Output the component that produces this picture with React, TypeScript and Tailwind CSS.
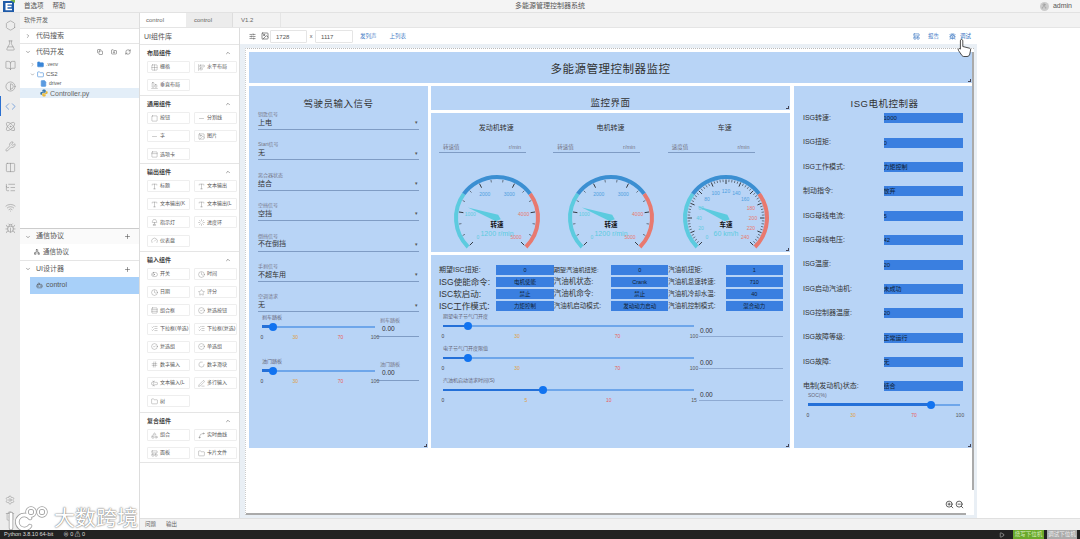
import type { ReactNode } from 'react';
import {
  Atom, BookOpen, Bot, Bug, ChevronDown, ChevronRight, ChevronUp, CircleCheck, Clock, Code, Contrast, Copy,
  FlaskConical, Folder, FolderPlus, Gauge as GaugeIcon, Grid2x2, Hash, Hexagon, Image, Lamp, LayoutPanelTop, ListChecks,
  ListTree, Loader, Minus, Network, PanelTop, PenLine, Play, Plus, RefreshCw, Rows3, Settings, SlidersHorizontal,
  Square, Star, ToggleLeft, Type, User, Wifi, Wrench, ZoomIn, ZoomOut, FileText, Columns2, AlignStartVertical, AlignEndHorizontal, Trash2, Loader2, TextCursorInput, Spline, Shapes,
} from 'lucide-react';

type LibItem = { icon: typeof Square; label: string };
type LibSection = { title: string; h: string; items: LibItem[] };

const LIB: LibSection[] = [
  { title: '布局组件', h: 'h-[51px]', items: [
    { icon: Grid2x2, label: '栅格' }, { icon: AlignStartVertical, label: '水平布局' }, { icon: AlignEndHorizontal, label: '垂直布局' },
  ] },
  { title: '通用组件', h: 'h-[68px]', items: [
    { icon: Square, label: '按钮' }, { icon: Minus, label: '分割线' }, { icon: Minus, label: '字' },
    { icon: Image, label: '图片' }, { icon: PanelTop, label: '选项卡' },
  ] },
  { title: '输出组件', h: 'h-[88px]', items: [
    { icon: Type, label: '标题' }, { icon: Type, label: '文本输出' }, { icon: Type, label: '文本输出(K' },
    { icon: Type, label: '文本输出(L' }, { icon: Lamp, label: '指示灯' }, { icon: Loader, label: '进度环' }, { icon: GaugeIcon, label: '仪表盘' },
  ] },
  { title: '输入组件', h: 'h-[161px]', items: [
    { icon: ToggleLeft, label: '开关' }, { icon: Clock, label: '时间' }, { icon: Clock, label: '日期' }, { icon: Star, label: '评分' },
    { icon: Rows3, label: '组合框' }, { icon: CircleCheck, label: '复选按钮' }, { icon: ListChecks, label: '下拉框(单选)' }, { icon: ListChecks, label: '下拉框(复选)' },
    { icon: CircleCheck, label: '复选组' }, { icon: CircleCheck, label: '单选组' }, { icon: Hash, label: '数字输入' }, { icon: Loader2, label: '数字滑块' },
    { icon: TextCursorInput, label: '文本输入(L' }, { icon: PenLine, label: '多行输入' }, { icon: Folder, label: '树' },
  ] },
  { title: '复合组件', h: 'h-[50px]', items: [
    { icon: Shapes, label: '组合' }, { icon: Spline, label: '实时曲线' }, { icon: LayoutPanelTop, label: '面板' }, { icon: Folder, label: '卡片文件' },
  ] },
];

const ACTIVITY = [Hexagon, FlaskConical, BookOpen, Contrast, Code, Atom, Wrench, Columns2, ListTree, Wifi, Bug];

const FIELDS = [
  ['钥匙信号', '上电'], ['Start信号', '无'], ['离合器状态', '结合'], ['空挡信号', '空挡'],
  ['倒挡信号', '不在倒挡'], ['手刹信号', '不超车用'], ['空调请求', '无'],
];

const DATA_ROWS = [
  [['期望ISC扭矩:', '0', 'text-[7px]'], ['期望汽油机扭矩:', '0', 'text-[6.2px]'], ['汽油机扭矩:', '1', 'text-[6.5px]']],
  [['ISG使能命令:', '电机使能', 'text-[8.5px]'], ['汽油机状态:', 'Crank', 'text-[7.5px]'], ['汽油机怠速转速:', '710', 'text-[6.5px]']],
  [['ISC软启动:', '禁止', 'text-[8.5px]'], ['汽油机命令:', '禁止', 'text-[7.5px]'], ['汽油机冷却水温:', '40', 'text-[6.5px]']],
  [['ISC工作模式:', '力矩控制', 'text-[8.5px]'], ['汽油机启动模式:', '发动动力启动', 'text-[6.5px]'], ['汽油机控制模式:', '混合动力', 'text-[6.5px]']],
];

const ISG_ROWS = [
  ['ISG转速:', '1000'], ['ISG扭矩:', '0'], ['ISG工作模式:', '力矩控制'], ['制动指令:', '放弃'],
  ['ISG母线电流:', '5'], ['ISG母线电压:', '42'], ['ISG温度:', '20'], ['ISG启动汽油机:', '未成功'],
  ['ISG控制器温度:', '20'], ['ISG故障等级:', '正常运行'], ['ISG故障:', '无'], ['电制(发动机)状态:', '结合'],
];

const CYAN = '#5ccbdf';
const BLUE = '#3b8fd2';
const RED = '#e8796f';

const polar = (cx: number, cy: number, r: number, deg: number) => {
  const a = (deg * Math.PI) / 180;
  return [cx + r * Math.cos(a), cy - r * Math.sin(a)];
};

function arcPath(cx: number, cy: number, r: number, from: number, to: number) {
  const [x1, y1] = polar(cx, cy, r, from);
  const [x2, y2] = polar(cx, cy, r, to);
  return `M${x1} ${y1} A${r} ${r} 0 ${from - to > 180 ? 1 : 0} 1 ${x2} ${y2}`;
}

function Gauge({ max, majors, minors, title, detail, value }: {
  max: number; majors: number; minors: number; title: string; detail: string; value: number;
}) {
  const cx = 58;
  const cy = 46;
  const angle = (v: number) => 225 - (v / max) * 270;
  const total = majors * minors;
  const ticks = Array.from({ length: total + 1 }, (_, i) => i);
  const labels = Array.from({ length: majors + 1 }, (_, i) => (max / majors) * i);
  const needle = angle(value);
  const [tipX, tipY] = polar(cx, cy, 31, needle);
  const [s1x, s1y] = polar(cx, cy, 3.4, needle + 90);
  const [s2x, s2y] = polar(cx, cy, 3.4, needle - 90);
  const [tailX, tailY] = polar(cx, cy, 4, needle + 180);
  return (
    <svg width="114" height="78" viewBox="0 0 114 78" className="block">
      <path d={arcPath(cx, cy, 41, 225, 144)} fill="none" stroke={CYAN} strokeWidth="4" />
      <path d={arcPath(cx, cy, 41, 144, 36)} fill="none" stroke={BLUE} strokeWidth="4" />
      <path d={arcPath(cx, cy, 41, 36, -45)} fill="none" stroke={RED} strokeWidth="4" />
      {ticks.map((i) => {
        const deg = 225 - (i / total) * 270;
        const long = i % minors === 0;
        const [x1, y1] = polar(cx, cy, 38.5, deg);
        const [x2, y2] = polar(cx, cy, long ? 34 : 36, deg);
        return <line key={i} x1={x1} y1={y1} x2={x2} y2={y2} stroke="#111" strokeWidth={long ? 0.8 : 0.5} />;
      })}
      {labels.map((v) => {
        const r = v / max;
        const [x, y] = polar(cx, cy, 27, angle(v));
        return (
          <text key={v} x={x} y={y + 2} textAnchor="middle" fontSize="5" fill={r < 0.3 ? CYAN : r <= 0.7 ? '#4f9fe0' : RED}>
            {v}
          </text>
        );
      })}
      <path d={`M${tipX} ${tipY} L${s1x} ${s1y} L${tailX} ${tailY} L${s2x} ${s2y} Z`} fill={CYAN} />
      <text x={cx} y={55} textAnchor="middle" fontSize="6.5" fontWeight="700" fill="#111">{title}</text>
      <text x={cx} y={63.5} textAnchor="middle" fontSize="7" fill={CYAN}>{detail}</text>
    </svg>
  );
}

function Slider({ label, pct, marks, width }: {
  label?: string; pct: number; marks: { at: number; text: string; color: string }[]; width: string;
}) {
  return (
    <div className={width}>
      <div className="h-[10px] text-[5px] leading-[10px] text-[#667]">{label}</div>
      <div className="relative h-[10px] flex items-center">
        <div className="h-[2px] w-full bg-[#6ea6ea]" />
        <div className="absolute left-0 h-[2.5px] bg-[#2470d8]" style={{ width: `${pct}%` }} />
        <div className="absolute w-[8px] h-[8px] -ml-[4px] rounded-full bg-[#1173f0]" style={{ left: `${pct}%` }} />
      </div>
      <div className="relative h-[10px] text-[5px] leading-[10px]">
        {marks.map((m) => (
          <span key={m.text} className="absolute -translate-x-1/2" style={{ left: `${m.at}%`, color: m.color }}>
            {m.text}
          </span>
        ))}
      </div>
    </div>
  );
}

const marks100 = [
  { at: 0, text: '0', color: '#444' },
  { at: 29.5, text: '30', color: '#e0a03c' },
  { at: 69.5, text: '70', color: '#e8605a' },
  { at: 100, text: '100', color: '#555' },
];

const marks15 = [
  { at: 33, text: '5', color: '#e0a03c' },
  { at: 66, text: '10', color: '#e8605a' },
  { at: 0, text: '0', color: '#444' },
  { at: 100, text: '15', color: '#555' },
];

function Panel({ className, children }: { className?: string; children?: ReactNode }) {
  return (
    <div className={`relative bg-[#b8d4f6] ${className ?? ''}`}>
      {children}
      <span className="absolute right-[1px] bottom-[1px] w-[3px] h-[3px] border-r border-b border-[#445]" />
    </div>
  );
}

function Explorer() {
  return (
    <div className="w-[120px] bg-white flex flex-col text-[7px] text-[#555] shrink-0 border-r border-[#ddd]">
      <div className="h-[15px] leading-[15px] px-[4px] text-[6px] bg-[#f4f4f4] text-[#666]">软件开发</div>
      <div className="h-[16px] flex items-center gap-[5px] px-[5px] border-y border-[#e5e5e5]">
        <ChevronRight size={6} /> 代码搜索
      </div>
      <div className="h-[16px] flex items-center gap-[5px] px-[5px]">
        <ChevronDown size={6} /> <span className="flex-1">代码开发</span>
        <Copy size={6} className="mr-[3px]" /><FolderPlus size={6} className="mr-[3px]" /><RefreshCw size={6} className="mr-[3px]" />
      </div>
      <div className="h-[9px] flex items-center gap-[2px] pl-[10px] text-[5px] leading-none">
        <ChevronRight size={5} /><Folder size={7} className="fill-[#3a86d8] text-[#3a86d8]" /> .venv
      </div>
      <div className="h-[10px] flex items-center gap-[2px] pl-[10px] text-[6px] leading-none">
        <ChevronDown size={5} /><Folder size={7} className="text-[#3a86d8]" /> CS2
      </div>
      <div className="h-[9px] flex items-center gap-[2px] pl-[20px] text-[5px] leading-none">
        <FileText size={7} className="fill-[#5b9be0] text-[#5b9be0]" /> driver
      </div>
      <div className="h-[10px] flex items-center gap-[2px] pl-[20px] text-[7px] leading-none bg-[#e3eef8] text-[#666]">
        <svg width="8" height="8" viewBox="0 0 8 8">
          <path d="M4 0.5C2.5 0.5 2.3 1.1 2.3 1.8V2.7H4.2V3.1H1.4C0.6 3.1 0.3 3.8 0.3 4.4C0.3 5.2 0.7 5.7 1.4 5.7H2.1V4.8C2.1 4.1 2.7 3.7 3.3 3.7H5C5.5 3.7 5.8 3.3 5.8 2.9V1.8C5.8 1 5 0.5 4 0.5Z" fill="#3b78a8" />
          <path d="M4 7.5C5.5 7.5 5.7 6.9 5.7 6.2V5.3H3.8V4.9H6.6C7.4 4.9 7.7 4.2 7.7 3.6C7.7 2.8 7.3 2.3 6.6 2.3H5.9V3.2C5.9 3.9 5.3 4.3 4.7 4.3H3C2.5 4.3 2.2 4.7 2.2 5.1V6.2C2.2 7 3 7.5 4 7.5Z" fill="#e8b93c" />
        </svg>
        Controller.py
      </div>
      <div className="flex-1" />
      <div className="h-[16px] flex items-center gap-[5px] px-[5px] border-t border-[#ccc] bg-[#fafafa]">
        <ChevronDown size={6} /> <span className="flex-1">通信协议</span><Plus size={7} className="mr-[3px]" />
      </div>
      <div className="h-[17px] flex items-center gap-[3px] pl-[14px] border-b border-[#e5e5e5] text-[6.5px]">
        <Network size={6} /> 通信协议
      </div>
      <div className="h-[16px] flex items-center gap-[5px] px-[5px]">
        <ChevronDown size={6} /> <span className="flex-1">UI设计器</span><Plus size={7} className="mr-[3px]" />
      </div>
      <div className="h-[17px] ml-[10px] flex items-center gap-[3px] pl-[6px] bg-[#a8d0f9]">
        <Bot size={7} /> control
      </div>
      <div className="h-[236px]" />
    </div>
  );
}

function Library() {
  return (
    <div className="w-[100px] bg-white flex flex-col shrink-0 border-r border-[#ddd] text-[#555]">
      <div className="h-[17px] leading-[17px] px-[4px] text-[7px] border-b border-[#e5e5e5]">UI组件库</div>
      {LIB.map((section) => (
        <div key={section.title} className={`${section.h} border-b border-[#e5e5e5] px-[7px]`}>
          <div className="h-[16px] flex items-center justify-between text-[6px] font-bold text-[#444]">
            {section.title}
            <ChevronUp size={6} className="mr-[1px]" />
          </div>
          <div className="grid grid-cols-2 gap-x-[4px] gap-y-[6.2px] w-[90px]">
            {section.items.map((item) => {
              const Icon = item.icon;
              return (
                <div key={item.label} className="h-[12px] flex items-center gap-[2px] px-[3px] border border-[#eee] rounded-[1px] text-[5px] whitespace-nowrap">
                  <Icon size={7} strokeWidth={1} className="shrink-0" />
                  {item.label}
                </div>
              );
            })}
          </div>
        </div>
      ))}
      <div className="flex-1" />
    </div>
  );
}

function Toolbar() {
  return (
    <div className="h-[16px] bg-white flex items-center pl-[9px] text-[5.5px] text-[#555] shrink-0">
      <SlidersHorizontal size={7} />
      <Image size={8} className="ml-[5px]" />
      <div className="ml-[1px] w-[37px] h-[13px] border border-[#e5e5e5] rounded-[1px] pl-[5px] leading-[12px] text-[6px]">1728</div>
      <span className="w-[8px] text-center">x</span>
      <div className="w-[38px] h-[13px] border border-[#e5e5e5] rounded-[1px] pl-[5px] leading-[12px] text-[6px]">1117</div>
      <span className="ml-[7px] text-[#4a7fc8]">发列声</span>
      <span className="ml-[13px] text-[#4a7fc8]">上列表</span>
      <div className="flex-1" />
      <LayoutPanelTop size={7} className="text-[#2f6fc0]" />
      <span className="ml-[8px] text-[#4a7fc8]">报告</span>
      <Bug size={7} className="ml-[10px] text-[#2f6fc0]" />
      <span className="ml-[4px] mr-[109px] text-[#2f6fc0]">调试</span>
    </div>
  );
}

function DriverPanel() {
  return (
    <Panel className="h-[362px] px-[9px]">
      <div className="pt-[11px] h-[25px] text-center text-[9.5px] leading-[14px] text-[#333] tracking-[0.5px]">驾驶员输入信号</div>
      {FIELDS.map(([label, value]) => (
        <div key={label} className="h-[30.4px]">
          <div className="h-[6px] text-[5px] leading-[6px] text-[#778]">{label}</div>
          <div className="h-[12px] flex items-center justify-between border-b border-[#7f9cc4] text-[7px] text-[#333] mt-[1px] pb-[1px] pr-[1px]">
            {value}
            <span className="text-[5px] text-[#555]">▾</span>
          </div>
        </div>
      ))}
      <div className="flex gap-[1px] -mt-[12px] pl-[4px]">
        <Slider label="刹车踏板" pct={10} marks={marks100} width="w-[113px]" />
        <div className="flex-1 pt-[5px]">
          <div className="h-[6px] text-[5px] leading-[6px] text-[#778] pl-[4px]">刹车踏板</div>
          <div className="h-[14px] border-b border-[#7f9cc4] text-[6.5px] leading-[12px] pl-[6px] text-[#333]">0.00</div>
        </div>
      </div>
      <div className="flex gap-[1px] mt-[14px] pl-[4px]">
        <Slider label="油门踏板" pct={10} marks={marks100} width="w-[113px]" />
        <div className="flex-1 pt-[5px]">
          <div className="h-[6px] text-[5px] leading-[6px] text-[#778] pl-[4px]">油门踏板</div>
          <div className="h-[14px] border-b border-[#7f9cc4] text-[6.5px] leading-[12px] pl-[6px] text-[#333]">0.00</div>
        </div>
      </div>
    </Panel>
  );
}

function GaugePanel() {
  const cols = [
    { title: '发动机转速', hint: '转速值', unit: 'r/min', gauge: <Gauge max={5000} majors={5} minors={3} title="转速" detail="1200 r/min" value={1200} /> },
    { title: '电机转速', hint: '转速值', unit: 'r/min', gauge: <Gauge max={5000} majors={5} minors={3} title="转速" detail="1200 r/min" value={1200} /> },
    { title: '车速', hint: '速度值', unit: 'r/min', gauge: <Gauge max={240} majors={12} minors={5} title="车速" detail="60 km/h" value={60} /> },
  ];
  return (
    <Panel className="h-[139px] px-[8px] grid grid-cols-3">
      {cols.map((col) => (
        <div key={col.title}>
          <div className="h-[29px] pt-[9px] text-center text-[7px] leading-[12px] text-[#333]">{col.title}</div>
          <div className="w-[87px] h-[11px] flex justify-between border-b border-[#7f9cc4] text-[5.5px] leading-[10px] text-[#778] pl-[4px] pr-[5px]">
            <span>{col.hint}</span><span>{col.unit}</span>
          </div>
          <div className="mt-[19px]">{col.gauge}</div>
        </div>
      ))}
    </Panel>
  );
}

function DataSlider({ label, pct, marks, mt }: { label: string; pct: number; marks: typeof marks100; mt: string }) {
  return (
    <div className={`flex ${mt}`}>
      <Slider label={label} pct={pct} marks={marks} width="w-[251px]" />
      <div className="ml-[5px] w-[84px] h-[22px] mt-[4px] pl-[1px] pt-[10px] border-b border-[#8eaad2] text-[6.5px] leading-[12px] text-[#333]">0.00</div>
    </div>
  );
}

function DataPanel() {
  return (
    <Panel className="h-[193px] pl-[8px] pr-[7px] pt-[10px]">
      <div className="flex flex-col gap-[2px]">
        {DATA_ROWS.map((row) => (
          <div key={row[0][0]} className="grid grid-cols-6 h-[10px] w-[344px] items-center">
            {row.map(([label, value, size]) => [
              <div key={label} className={`${size} leading-[10px] text-[#333] whitespace-nowrap`}>{label}</div>,
              <div key={label + '-v'} className="h-[10px] bg-[#3a7fe0] text-center text-[5.5px] leading-[10px] text-[#123]">{value}</div>,
            ])}
          </div>
        ))}
      </div>
      <div className="pl-[4px]">
        <DataSlider label="期望电子节气门开度" pct={10} marks={marks100} mt="" />
        <DataSlider label="电子节气门开度限值" pct={10} marks={marks100} mt="mt-[2px]" />
        <DataSlider label="汽油机启动请求时间(S)" pct={40} marks={marks15} mt="mt-[2px]" />
      </div>
    </Panel>
  );
}

function IsgPanel() {
  return (
    <Panel className="h-[362px] px-[9px]">
      <div className="pt-[11px] pl-[3px] h-[20px] text-center text-[9.5px] leading-[14px] text-[#333] tracking-[0.5px]">ISG电机控制器</div>
      {ISG_ROWS.map(([label, value]) => (
        <div key={label} className="h-[24.4px] flex items-center">
          <div className="w-[81px] text-[7px] text-[#333] whitespace-nowrap">{label}</div>
          <div className="w-[80px] h-[10px] bg-[#3a7fe0] text-[6px] leading-[10px] text-[#123] overflow-hidden">{value}</div>
        </div>
      ))}
      <div className="pl-[5px] -mt-[9px]">
        <Slider label="SOC(%)" pct={81} marks={[
          { at: 0, text: '0', color: '#444' }, { at: 29.6, text: '30', color: '#e0a03c' },
          { at: 69.7, text: '70', color: '#e8605a' }, { at: 100, text: '100', color: '#555' },
        ]} width="w-[152px]" />
      </div>
    </Panel>
  );
}

function Canvas() {
  return (
    <div className="flex-1 bg-[#e9eff5] pl-[5px] pr-[3px] pt-[4px] pb-[3px] min-h-0">
      <div className="relative h-full bg-white border-t border-dotted border-[#bbb] border-l border-l-[#ccc] pl-[3px] pt-[3px]">
        <Panel className="w-[723px] h-[31px] mb-[3px] flex items-center justify-center pt-[5px] text-[11.5px] text-[#333] tracking-[0.5px]">多能源管理控制器监控</Panel>
        <div className="flex">
          <div className="w-[179px] mr-[3px]"><DriverPanel /></div>
          <div className="w-[359px] mr-[4px] flex flex-col gap-[3px]">
            <Panel className="h-[24px] text-center text-[9.5px] leading-[34px] text-[#333] tracking-[0.5px]">监控界面</Panel>
            <GaugePanel />
            <DataPanel />
          </div>
          <div className="w-[178px]"><IsgPanel /></div>
        </div>
        {/* 滚动条 */}
        <div className="absolute right-[0px] top-[3px] w-[2px] h-[438px] bg-[#aaa]" />
        <div className="absolute left-0 bottom-0 w-[720px] h-[2px] bg-[#aaa]" />
        <div className="absolute right-[10px] bottom-[6px] flex gap-[1px] text-[#333]">
          <ZoomIn size={9} /><ZoomOut size={9} />
        </div>
      </div>
    </div>
  );
}

export default function App() {
  return (
    <div className="relative w-[1080px] h-[539px] overflow-hidden flex flex-col bg-white font-['Liberation_Sans','Noto_Sans_CJK_SC',sans-serif]">
      {/* 顶部菜单 */}
      <div className="h-[13px] shrink-0 flex items-center bg-[#f4f4f4] border-b border-[#e2e2e2] text-[6.5px] text-[#555]">
        <svg width="20" height="13" viewBox="0 0 20 13" className="shrink-0">
          <rect x="3" y="1" width="11" height="11" fill="#1e5aa8" />
          <path d="M5.5 3H12V4.5H7.5V5.8H11.5V7.2H7.5V8.8H12V10.3H5.5Z" fill="#fff" />
          <path d="M10 0L15 0L15 3Z" fill="#7ab648" />
        </svg>
        <span className="ml-[4px]">首选项</span>
        <span className="ml-[9px]">帮助</span>
        <span className="absolute left-[515px] text-[7px]">多能源管理控制器系统</span>
        <span className="ml-auto w-[9px] h-[9px] rounded-full bg-[#ccc] flex items-center justify-center"><User size={6} className="text-[#888]" /></span>
        <span className="ml-[4px] mr-[8px] text-[7px]">admin</span>
      </div>

      <div className="flex-1 min-h-0 flex">
        {/* 活动栏 */}
        <div className="w-[20px] shrink-0 bg-[#ececec] flex flex-col items-center pt-[2px] text-[#8a8a8a]">
          {ACTIVITY.map((Icon, i) => (
            <div key={i} className={`h-[20.3px] w-full flex items-center justify-center shrink-0 ${i === 4 ? 'border-l border-[#2a6fd0] text-[#2a6fd0]' : ''}`}>
              <Icon size={11} strokeWidth={1.2} />
            </div>
          ))}
          <div className="flex-1" />
          <Settings size={10} strokeWidth={1.2} className="mb-[6px]" />
          <Trash2 size={10} strokeWidth={1.2} className="mb-[9px]" />
        </div>

        <Explorer />

        <div className="flex-1 min-w-0 flex flex-col">
          {/* 标签页 */}
          <div className="h-[15px] shrink-0 flex bg-[#f2f2f2] border-b border-[#e5e5e5] text-[6px] text-[#666]">
            <div className="w-[46px] bg-white pl-[6px] leading-[15px]">control</div>
            <div className="w-[47px] bg-[#ececec] pl-[8px] leading-[15px] border-r border-[#ddd]">control</div>
            <div className="w-[48px] pl-[8px] leading-[15px] border-r border-[#e5e5e5]">V1.2</div>
          </div>

          <div className="flex-1 min-h-0 flex flex-col">
            <div className="flex-1 min-h-0 flex">
              <Library />
              <div className="flex-1 min-w-0 flex flex-col">
                <Toolbar />
                <div className="flex-1 min-h-0 flex">
                  <div className="w-[737px] flex flex-col"><Canvas /></div>
                  <div className="flex-1 bg-white" />
                </div>
              </div>
            </div>
            {/* 底部页签 */}
            <div className="h-[12px] shrink-0 bg-[#f2f2f2] border-t border-[#e0e0e0] flex items-center gap-[10px] pl-[5px] text-[5.5px] text-[#666]">
              <span>问题</span><span>输出</span>
            </div>
          </div>
        </div>
      </div>

      {/* 状态栏 */}
      <div className="h-[9px] shrink-0 bg-[#222] flex items-center text-[5.5px] text-[#ddd] pl-[4px]">
        <span>Python 3.8.10 64-bit</span>
        <span className="ml-[10px]">⊗ 0 ⚠ 0</span>
        <Play size={6} className="ml-auto text-[#ddd]" />
        <span className="ml-[8px] w-[31px] h-full bg-[#6aa82a] text-center leading-[9px] text-[#d8eec0]">烧写下位机</span>
        <span className="ml-[3px] mr-[3px] w-[30px] h-full bg-[#aaa] text-center leading-[9px] text-[#eee]">调试下位机</span>
      </div>

      {/* 水印 */}
      <div className="absolute left-[8px] bottom-[9px] flex items-center gap-[6px] pointer-events-none">
        <svg width="40" height="24" viewBox="0 0 40 24" fill="none">
          <g stroke="#999" strokeWidth="4.4" strokeLinecap="round">
            <path d="M3 8V22" /><path d="M22 12A7 7 0 1 0 22 20" />
            <circle cx="23" cy="6" r="4" strokeWidth="3.4" /><circle cx="34" cy="6" r="4" strokeWidth="3.4" />
          </g>
          <g stroke="#fff" strokeWidth="3" strokeLinecap="round">
            <path d="M3 8V22" /><path d="M22 12A7 7 0 1 0 22 20" />
            <circle cx="23" cy="6" r="4" strokeWidth="2" /><circle cx="34" cy="6" r="4" strokeWidth="2" />
          </g>
        </svg>
        <span className="text-[21px] leading-[24px] text-white [text-shadow:0_0_1px_#777,0_0_2px_#777]">大数跨境</span>
      </div>

      {/* 鼠标手型 */}
      <svg width="15" height="20" viewBox="0 0 15 20" className="absolute left-[957px] top-[38px] pointer-events-none">
        <path d="M4.5 1.5C5.3 1.5 5.8 2 5.8 2.8V8.5L9 9.3L12.5 10.2C13.3 10.5 13.7 11 13.6 11.8L12.8 16C12.6 17.5 11.5 18.5 10 18.5H7C6 18.5 5.2 18 4.6 17L1.5 12.5C1 11.8 1.2 11 1.8 10.7C2.4 10.4 3 10.6 3.4 11.1L3.4 2.8C3.3 2 3.8 1.5 4.5 1.5Z" fill="#fff" stroke="#222" strokeWidth="0.8" />
      </svg>
    </div>
  );
}
